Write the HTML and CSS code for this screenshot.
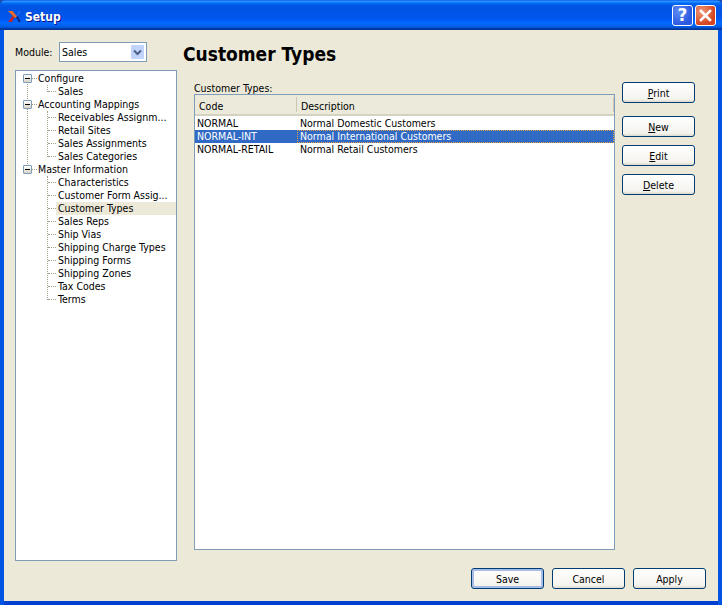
FILE: index.html
```html
<!DOCTYPE html>
<html lang="en">
<head>
    <meta charset="UTF-8">
    <meta name="viewport" content="width=device-width, initial-scale=1.0">
    <title>Setup</title>
    <link rel="stylesheet" href="styles.css">
</head>
<body>
    <div class="window">
        <div class="titlebar">
            <svg class="app-icon" width="13" height="11" viewBox="0 0 13 11">
                <path d="M8 5l3-5h2L9 6z" fill="#1c6cf0"/>
                <path d="M8 6l2.500 5H13L9.500 4.500z" fill="#0a2c8c"/>
                <path d="M0 11l4.500-6 2 1-2.500 5z" fill="#c8202c"/>
                <path d="M0 0h4.500L9 5.500 7 7z" fill="#f06a1e"/>
            </svg>
            <span class="title">Setup</span>
            <button class="cap-btn cap-help" type="button">?</button>
            <button class="cap-btn cap-close" type="button">
                <svg width="15" height="15" viewBox="0 0 15 15"><path d="M3 3l9 9M12 3l-9 9" stroke="#fff" stroke-width="2.600" stroke-linecap="square"/></svg>
            </button>
        </div>
        <div class="client">
            <div class="columns">
                <div class="sidebar">
                    <div class="module">
                        <label class="module-label">Module:</label>
                        <div class="combo">
                            <span class="combo-value">Sales</span>
                            <span class="combo-arrow">
                                <svg width="9" height="7" viewBox="0 0 9 7"><path d="M1 1.500l3.500 3.500 3.500-3.500" fill="none" stroke="#4d6185" stroke-width="2"/></svg>
                            </span>
                        </div>
                    </div>
                    <ul class="tree">
                        <li class="node">
                            <div class="row"><span class="expander"></span>Configure</div>
                            <ul class="leaves">
                                <li class="leaf">Sales</li>
                            </ul>
                        </li>
                        <li class="node">
                            <div class="row"><span class="expander"></span>Accounting Mappings</div>
                            <ul class="leaves">
                                <li class="leaf">Receivables Assignm...</li>
                                <li class="leaf">Retail Sites</li>
                                <li class="leaf">Sales Assignments</li>
                                <li class="leaf">Sales Categories</li>
                            </ul>
                        </li>
                        <li class="node">
                            <div class="row"><span class="expander"></span>Master Information</div>
                            <ul class="leaves">
                                <li class="leaf">Characteristics</li>
                                <li class="leaf">Customer Form Assig...</li>
                                <li class="leaf selected">Customer Types</li>
                                <li class="leaf">Sales Reps</li>
                                <li class="leaf">Ship Vias</li>
                                <li class="leaf">Shipping Charge Types</li>
                                <li class="leaf">Shipping Forms</li>
                                <li class="leaf">Shipping Zones</li>
                                <li class="leaf">Tax Codes</li>
                                <li class="leaf">Terms</li>
                            </ul>
                        </li>
                    </ul>
                </div>
                <div class="main">
                    <h1>Customer Types</h1>
                    <div class="panel">
                        <div class="list-area">
                            <div class="list-label">Customer Types:</div>
                            <div class="list">
                                <div class="list-head">
                                    <div class="head-cell head-code">Code</div>
                                    <div class="head-cell head-desc">Description</div>
                                </div>
                                <div class="list-row">
                                    <span class="cell-code">NORMAL</span>
                                    <span class="cell-desc">Normal Domestic Customers</span>
                                </div>
                                <div class="list-row current">
                                    <span class="cell-code">NORMAL-INT</span>
                                    <span class="cell-desc">Normal International Customers</span>
                                </div>
                                <div class="list-row">
                                    <span class="cell-code">NORMAL-RETAIL</span>
                                    <span class="cell-desc">Normal Retail Customers</span>
                                </div>
                            </div>
                        </div>
                        <div class="actions">
                            <button class="btn print-btn" type="button"><u>P</u>rint</button>
                            <button class="btn" type="button"><u>N</u>ew</button>
                            <button class="btn" type="button"><u>E</u>dit</button>
                            <button class="btn" type="button"><u>D</u>elete</button>
                        </div>
                    </div>
                </div>
            </div>
            <div class="footer">
                <button class="btn default" type="button">Save</button>
                <button class="btn" type="button">Cancel</button>
                <button class="btn" type="button">Apply</button>
            </div>
        </div>
    </div>
</body>
</html>
```

FILE: styles.css
```css
* {
    box-sizing: border-box;
}
html, body {
    margin: 0;
    padding: 0;
    height: 605px;
    overflow: hidden;
    background-color: #1a4fb0;
}
body {
    font-family: "DejaVu Sans", Arial, sans-serif;
    font-stretch: condensed;
    font-size: 10.500px;
    color: #000;
}
ul {
    list-style: none;
    margin: 0;
    padding: 0;
}
button {
    font: inherit;
    font-stretch: condensed;
    color: inherit;
    padding: 0;
}
.window {
    width: 722px;
    height: 605px;
    display: flex;
    flex-direction: column;
    border-radius: 6px 6px 0 0;
    background-color: #0054e3;
    overflow: hidden;
}
.titlebar {
    height: 30px;
    flex: none;
    display: flex;
    align-items: center;
    padding: 2px 6px 0 8px;
    background: linear-gradient(to bottom, #0058ee 0%, #3593ff 4%, #288eff 6%, #127dff 8%, #036ffc 10%, #0262ee 14%, #0057e5 20%, #0054e3 24%, #0055eb 56%, #005bf5 66%, #026afe 76%, #0062ef 86%, #0052d6 92%, #0040ab 94%, #003092 100%);
}
.app-icon {
    flex: none;
    margin-right: 4px;
}
.title {
    flex: 1;
    padding-top: 1px;
    color: #fff;
    font-weight: bold;
    font-size: 12px;
    text-shadow: 1px 1px 0 #0f1089;
}
.cap-btn {
    width: 21px;
    height: 21px;
    margin-left: 2px;
    margin-top: -2px;
    border: 1px solid #fff;
    border-radius: 3px;
    display: flex;
    align-items: center;
    justify-content: center;
    color: #fff;
}
.cap-help {
    background: radial-gradient(circle at 30% 30%, #5f8cf5, #2a58e0 70%);
    font-family: "DejaVu Sans", sans-serif;
    font-stretch: normal;
    font-weight: bold;
    font-size: 17px;
}
.cap-close {
    background: radial-gradient(circle at 30% 30%, #ee9a7c, #d6431d 70%);
}
.client {
    flex: 1;
    min-height: 0;
    margin: 0 4px 4px;
    padding: 12px 12px 12px 11px;
    background-color: #ece9d8;
    display: flex;
    flex-direction: column;
    box-shadow: 0 4px 0 #0040d0;
}
.columns {
    flex: 1;
    min-height: 0;
    display: flex;
}
.sidebar {
    width: 162px;
    flex: none;
    display: flex;
    flex-direction: column;
}
.module {
    height: 20px;
    margin-bottom: 8px;
    display: flex;
    align-items: center;
}
.module-label {
    width: 44px;
}
.combo {
    width: 88px;
    height: 20px;
    padding: 1px 1px 1px 2px;
    border: 1px solid #7f9db9;
    background-color: #fff;
    display: flex;
    align-items: center;
}
.combo-value {
    flex: 1;
}
.combo-arrow {
    width: 15px;
    height: 16px;
    border: 1px solid #fff;
    border-radius: 2px;
    background-color: #c1d3fb;
    display: flex;
    align-items: center;
    justify-content: center;
}
.tree {
    width: 162px;
    height: 491px;
    padding-top: 1px;
    border: 1px solid #7f9db9;
    background-color: #fff;
}
.node {
    position: relative;
}
/* dotted line joining the top level boxes */
.node:not(:last-child)::before {
    content: "";
    position: absolute;
    left: 11px;
    top: 6px;
    bottom: -7px;
    border-left: 1px dotted #a09f88;
}
.row,
.leaf {
    height: 13px;
    line-height: 13px;
    white-space: nowrap;
}
.row {
    position: relative;
    padding-left: 22px;
}
.row::after {
    content: "";
    position: absolute;
    left: 16px;
    top: 6px;
    width: 5px;
    border-top: 1px dotted #a09f88;
}
.expander {
    position: absolute;
    z-index: 1;
    left: 7px;
    top: 2px;
    width: 9px;
    height: 9px;
    border: 1px solid #7f9db9;
    border-radius: 1px;
    background: linear-gradient(to bottom, #fff, #d8d4c4);
}
.expander::after {
    content: "";
    position: absolute;
    left: 1px;
    top: 3px;
    width: 5px;
    height: 1px;
    background-color: #000;
}
.leaves {
    position: relative;
}
.leaves::before {
    content: "";
    position: absolute;
    left: 31px;
    top: 0;
    bottom: 6px;
    border-left: 1px dotted #a09f88;
}
.leaf {
    position: relative;
    margin-left: 40px;
    padding-left: 2px;
}
.leaf::before {
    content: "";
    position: absolute;
    left: -8px;
    top: 6px;
    width: 8px;
    border-top: 1px dotted #a09f88;
}
.leaf.selected {
    background-color: #ece9d8;
}
.main {
    flex: 1;
    min-width: 0;
    padding-left: 6px;
    display: flex;
    flex-direction: column;
}
h1 {
    margin: 0;
    height: 40px;
    line-height: 24px;
    font-size: 19px;
    font-weight: bold;
}
.panel {
    flex: 1;
    min-height: 0;
    display: flex;
    padding-left: 11px;
}
.list-area {
    width: 421px;
    flex: none;
    display: flex;
    flex-direction: column;
}
.list-label {
    height: 12px;
    line-height: 12px;
}
.list {
    height: 456px;
    border: 1px solid #7f9db9;
    background-color: #fff;
}
.list-head {
    display: flex;
    height: 21px;
    background-color: #ebeadb;
    border-bottom: 2px solid #d6d2c2;
}
.head-cell {
    line-height: 22px;
    padding-left: 4px;
    position: relative;
}
.head-cell::after {
    content: "";
    position: absolute;
    right: 0;
    top: 2px;
    height: 15px;
    border-right: 1px solid #cbc7b8;
}
.head-code {
    width: 102px;
}
.head-desc {
    flex: 1;
}
.list-row {
    display: flex;
    height: 13px;
    line-height: 13px;
    white-space: nowrap;
}
.list-head + .list-row {
    margin-top: 1px;
}
.cell-code {
    width: 102px;
    padding-left: 2px;
}
.cell-desc {
    flex: 1;
    padding-left: 3px;
}
.list-row.current {
    background-color: #316ac5;
    color: #fff;
}
.list-row.current .cell-desc {
    outline: 1px dotted #e8a040;
    outline-offset: -1px;
}
.actions {
    margin-left: 7px;
    display: flex;
    flex-direction: column;
    gap: 8px;
    width: 73px;
}
.print-btn {
    margin-bottom: 5px;
}
.btn {
    width: 73px;
    height: 21px;
    flex: none;
    border: 1px solid #003c74;
    border-radius: 3px;
    background: linear-gradient(to bottom, #ffffff, #f4f3ee 85%, #dcd8cc);
    text-align: center;
}
.btn.default {
    box-shadow: inset 0 0 0 2px #a5bde8;
}
.footer {
    flex: none;
    height: 27px;
    padding-top: 6px;
    display: flex;
    justify-content: flex-end;
    gap: 8px;
}
```
